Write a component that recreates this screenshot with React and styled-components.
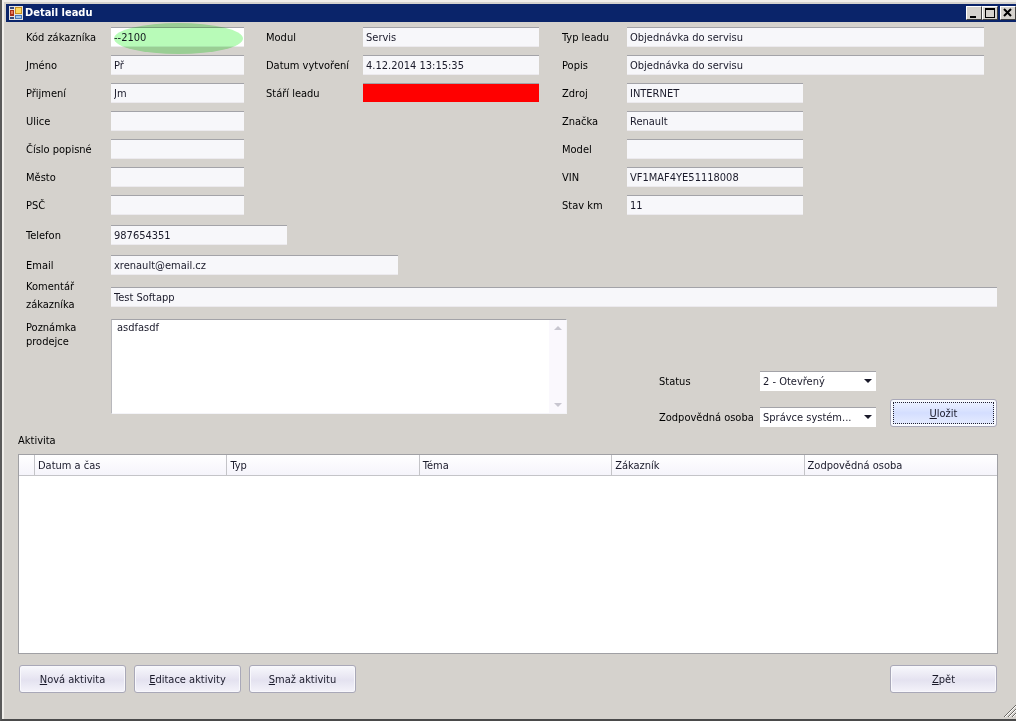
import React from "react";
import styled, { createGlobalStyle } from "styled-components";

const GlobalStyle = createGlobalStyle`
  * { box-sizing: border-box; }
  body { margin: 0; background: #d5d2cd; }
  body, input, textarea, select, button, table {
    font-family: "DejaVu Sans Condensed", "DejaVu Sans", sans-serif;
    font-size: 11px;
    color: #1a1a2a;
  }
`;

const Window = styled.div`
  position: relative;
  min-height: 100vh;
  display: flex;
  flex-direction: column;
  padding: 4px 0 0 3px;
  background: #d5d2cd;
  border-left: 2px solid #5a5a5a;
  border-bottom: 2px solid #4a4a4a;
  box-shadow: inset 2px 2px 0 #f0eeea;
`;

const TitleBar = styled.header`
  display: flex;
  align-items: center;
  gap: 2px;
  height: 18px;
  padding-left: 3px;
  background: #0a246a;
  margin-left: 1px;
`;

const Title = styled.h1`
  flex: 1;
  margin: 0;
  font-size: 11px;
  line-height: 18px;
  font-weight: bold;
  color: #fff;
`;

const Controls = styled.div`
  display: flex;
`;

const ControlButton = styled.button`
  width: 16px;
  height: 14px;
  padding: 0;
  display: grid;
  place-items: center;
  background: #d5d2cd;
  border: 1px solid;
  border-color: #fff #404040 #404040 #fff;
  margin-left: ${(p) => (p.$apart ? "2px" : "0")};
`;

const Content = styled.main`
  flex: 1;
  display: flex;
  flex-direction: column;
  padding: 5px 18px 26px 13px;
`;

const Form = styled.form`
  display: flex;
  flex-direction: column;
  gap: 10px;
  padding: 0 1px 0 8px;
`;

const Columns = styled.div`
  display: grid;
  grid-template-columns: 218px 274px 1fr;
  column-gap: 22px;
  padding-right: 13px;
`;

const Column = styled.div`
  display: flex;
  flex-direction: column;
  gap: 8px;
`;

const Row = styled.div`
  display: grid;
  grid-template-columns: ${(p) => p.$label || 85}px minmax(0, 1fr);
  align-items: ${(p) => p.$align || "center"};
`;

const Label = styled.label`
  padding-top: 2px;
  color: #000;
  line-height: ${(p) => p.$line || 14}px;
  white-space: pre-line;
`;

const FieldBox = styled.div`
  position: relative;
  width: ${(p) => (p.$width ? `${p.$width}px` : "100%")};
  height: 20px;
`;

const Field = styled.input`
  display: block;
  width: 100%;
  height: 20px;
  padding: 0 3px;
  border: 0;
  border-top: 1px solid #a3a3a8;
  border-bottom: 1px solid ${(p) => (p.$bg === "#f00" ? "#d5d2cd" : "#eceaee")};
  border-radius: 0;
  outline: none;
  background: ${(p) => p.$bg || "#f7f7fa"};
`;

const Marker = styled.span`
  position: absolute;
  left: 3px;
  top: -4px;
  width: 129px;
  height: 31px;
  border-radius: 50%;
  background: #b8fbb8;
  mix-blend-mode: multiply;
  pointer-events: none;
`;

const CommentRow = styled(Row)`
  align-items: end;
  margin-top: -9px;

  ${FieldBox} { margin-bottom: 7px; }
`;

const NoteArea = styled.div`
  display: flex;
  justify-content: space-between;
  align-items: flex-end;
  margin-top: -5px;
`;

const NoteRow = styled(Row)`
  width: 541px;
`;

const NoteBox = styled.div`
  display: flex;
  height: 95px;
  background: #fff;
  border: 1px solid #f4f4f8;
  border-top-color: #a3a3a8;
  border-left-color: #b8b8bc;
`;

const Note = styled.textarea`
  flex: 1;
  min-width: 0;
  padding: 1px 5px;
  border: 0;
  outline: none;
  resize: none;
  overflow: hidden;
  line-height: 14px;
  background: transparent;
`;

const Scroll = styled.div`
  width: 17px;
  display: flex;
  flex-direction: column;
  justify-content: space-between;
  align-items: center;
  padding: 6px 0;
  background: #faf8fd;
`;

const Assign = styled.div`
  display: flex;
  align-items: flex-end;
  gap: 14px;
`;

const Selects = styled.div`
  display: flex;
  flex-direction: column;
  gap: 16px;
  width: 217px;
  margin-bottom: -13px;
`;

const SelectBox = styled.div`
  position: relative;

  svg {
    position: absolute;
    right: 4px;
    top: 8px;
    pointer-events: none;
  }
`;

const Select = styled.select`
  appearance: none;
  display: block;
  width: 100%;
  height: 20px;
  padding: 0 3px;
  border: 0;
  border-top: 1px solid #a3a3a8;
  border-radius: 0;
  background: #fff;
`;

const Button = styled.button`
  width: 107px;
  height: 28px;
  padding: 0;
  border: 1px solid #a9a8b8;
  border-radius: 3px;
  background: linear-gradient(#f8f8fc, #e4e2f0 55%, #f4f3fa);
  box-shadow: inset 0 0 0 1px #f8f8fc;
`;

const SaveButton = styled(Button)`
  margin-bottom: -13px;
  background: linear-gradient(#f0f4ff, #d4deff 50%, #e8eeff);
  box-shadow: inset 0 0 0 2px #f8faff;
  outline: 1px dotted #223;
  outline-offset: -4px;
`;

const Section = styled.section`
  flex: 1;
  display: flex;
  flex-direction: column;
  margin-top: 20px;
`;

const SectionTitle = styled.h2`
  margin: 0 0 6px;
  font-size: 11px;
  font-weight: normal;
  line-height: 14px;
  color: #000;
`;

const Grid = styled.div`
  flex: 1;
  min-height: 100px;
  background: #fff;
  border: 1px solid #a0a0a4;
`;

const Table = styled.table`
  width: 100%;
  table-layout: fixed;
  border-collapse: separate;
  border-spacing: 0;
`;

const HeadCell = styled.th`
  width: ${(p) => (p.$narrow ? "16px" : "auto")};
  height: 21px;
  padding: 0 3px;
  text-align: left;
  font-weight: normal;
  background: linear-gradient(#fff, #f5f4fb);
  border-bottom: 1px solid #c4c4c8;
  border-right: 1px solid #c4c4c8;

  &:last-child { border-right: 0; }
`;

const Actions = styled.footer`
  display: flex;
  gap: 8px;
  margin: 11px 1px 0;

  ${Button}:last-child { margin-left: auto; }
`;

const Grip = styled.svg`
  position: absolute;
  right: 0;
  bottom: 2px;
`;

const Arrow = ({ up, color = "#1a1a2a" }) => (
  <svg width="8" height="4" viewBox="0 0 8 4" aria-hidden="true">
    <path d={up ? "M0 4h8L4 0z" : "M0 0h8L4 4z"} fill={color} />
  </svg>
);

const AppIcon = () => (
  <svg width="14" height="14" viewBox="0 0 14 14" aria-hidden="true">
    <rect width="14" height="14" fill="#e4e2e0" />
    <rect x="1" y="1" width="4" height="2" fill="#3a4a7a" />
    <rect x="1" y="4" width="4" height="6" fill="#a83018" />
    <rect x="2" y="5" width="2" height="3" fill="#e87858" />
    <rect x="6" y="1" width="7" height="7" fill="#c89020" />
    <rect x="7" y="2" width="5" height="5" fill="#fcd860" />
    <rect x="1" y="11" width="4" height="2" fill="#3a4a7a" />
    <rect x="6" y="9" width="7" height="4" fill="#4a78b8" />
    <rect x="7" y="10" width="5" height="2" fill="#a0c4ec" />
  </svg>
);

const left = [
  ["kod", "Kód zákazníka", "--2100"],
  ["jmeno", "Jméno", "Př"],
  ["prijmeni", "Přijmení", "Jm"],
  ["ulice", "Ulice", ""],
  ["cislo", "Číslo popisné", ""],
  ["mesto", "Město", ""],
  ["psc", "PSČ", ""],
];

const middle = [
  ["modul", "Modul", "Servis"],
  ["datum", "Datum vytvoření", "4.12.2014 13:15:35"],
  ["stari", "Stáří leadu", ""],
];

const right = [
  ["typ", "Typ leadu", "Objednávka do servisu"],
  ["popis", "Popis", "Objednávka do servisu"],
  ["zdroj", "Zdroj", "INTERNET", 176],
  ["znacka", "Značka", "Renault", 176],
  ["model", "Model", "", 176],
  ["vin", "VIN", "VF1MAF4YE51118008", 176],
  ["km", "Stav km", "11", 176],
];

const FormField = ({ id, label, value, width, labelWidth, bg, marked }) => (
  <Row $label={labelWidth}>
    <Label htmlFor={id}>{label}</Label>
    <FieldBox $width={width}>
      <Field id={id} defaultValue={value} $bg={bg} />
      {marked && <Marker />}
    </FieldBox>
  </Row>
);

export default function App() {
  return (
    <>
      <GlobalStyle />
      <Window>
        <TitleBar>
          <AppIcon />
          <Title>Detail leadu</Title>
          <Controls>
            <ControlButton aria-label="Minimalizovat">
              <svg width="10" height="10"><path d="M1 8h6v2H1z" /></svg>
            </ControlButton>
            <ControlButton aria-label="Maximalizovat">
              <svg width="10" height="10"><path d="M0 0h10v10H0zM1 2v7h8V2z" fillRule="evenodd" /></svg>
            </ControlButton>
            <ControlButton aria-label="Zavřít" $apart>
              <svg width="10" height="10"><path d="M1 1l7 7M8 1l-7 7" stroke="#000" strokeWidth="2" /></svg>
            </ControlButton>
          </Controls>
        </TitleBar>
        <Content>
          <Form onSubmit={(e) => e.preventDefault()}>
            <Columns>
              <Column>
                {left.map(([id, label, value]) => (
                  <FormField key={id} id={id} label={label} value={value} marked={id === "kod"} bg={id === "kod" ? "#fff" : undefined} />
                ))}
              </Column>
              <Column>
                {middle.map(([id, label, value]) => (
                  <FormField key={id} id={id} label={label} value={value} labelWidth={97} width={176} bg={id === "stari" ? "#f00" : undefined} />
                ))}
              </Column>
              <Column>
                {right.map(([id, label, value, width]) => (
                  <FormField key={id} id={id} label={label} value={value} labelWidth={65} width={width} />
                ))}
              </Column>
            </Columns>
            <FormField id="telefon" label="Telefon" value="987654351" width={176} />
            <FormField id="email" label="Email" value="xrenault@email.cz" width={287} />
            <CommentRow>
              <Label htmlFor="komentar" $line={18}>{"Komentář\nzákazníka"}</Label>
              <FieldBox>
                <Field id="komentar" defaultValue="Test Softapp" />
              </FieldBox>
            </CommentRow>
            <NoteArea>
              <NoteRow $align="start">
                <Label htmlFor="poznamka">{"Poznámka\nprodejce"}</Label>
                <NoteBox>
                  <Note id="poznamka" defaultValue="asdfasdf" />
                  <Scroll>
                    <Arrow up color="#c8c6d0" />
                    <Arrow color="#c8c6d0" />
                  </Scroll>
                </NoteBox>
              </NoteRow>
              <Assign>
                <Selects>
                  <Row $label={101}>
                    <Label htmlFor="status">Status</Label>
                    <SelectBox>
                      <Select id="status"><option>2 - Otevřený</option></Select>
                      <Arrow />
                    </SelectBox>
                  </Row>
                  <Row $label={101}>
                    <Label htmlFor="osoba">Zodpovědná osoba</Label>
                    <SelectBox>
                      <Select id="osoba"><option>Správce systém...</option></Select>
                      <Arrow />
                    </SelectBox>
                  </Row>
                </Selects>
                <SaveButton type="submit"><u>U</u>ložit</SaveButton>
              </Assign>
            </NoteArea>
          </Form>
          <Section>
            <SectionTitle>Aktivita</SectionTitle>
            <Grid>
              <Table>
                <thead>
                  <tr>
                    <HeadCell $narrow />
                    <HeadCell>Datum a čas</HeadCell>
                    <HeadCell>Typ</HeadCell>
                    <HeadCell>Téma</HeadCell>
                    <HeadCell>Zákazník</HeadCell>
                    <HeadCell>Zodpovědná osoba</HeadCell>
                  </tr>
                </thead>
              </Table>
            </Grid>
          </Section>
          <Actions>
            <Button type="button"><u>N</u>ová aktivita</Button>
            <Button type="button"><u>E</u>ditace aktivity</Button>
            <Button type="button"><u>S</u>maž aktivitu</Button>
            <Button type="button"><u>Z</u>pět</Button>
          </Actions>
        </Content>
        <Grip width="12" height="12" viewBox="0 0 12 12" aria-hidden="true">
          <path d="M1 12L12 1M5 12l7-7M9 12l3-3" stroke="#fff" />
          <path d="M0 12L12 0M4 12l8-8M8 12l4-4" stroke="#6a6863" />
        </Grip>
      </Window>
    </>
  );
}
